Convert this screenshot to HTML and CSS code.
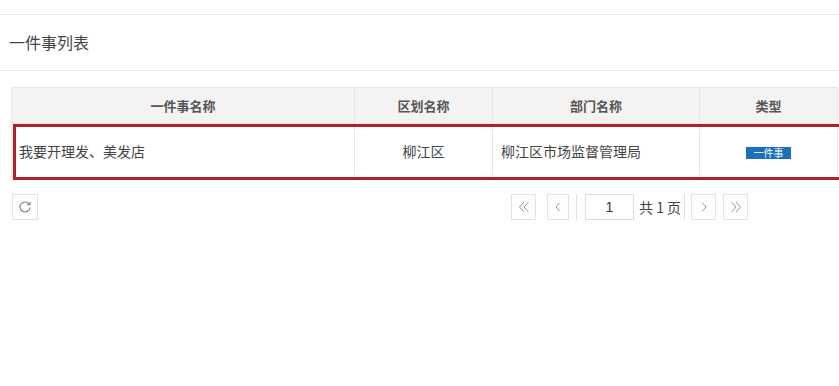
FILE: index.html
```html
<!DOCTYPE html>
<html lang="zh-CN">
<head>
  <meta charset="UTF-8">
  <title>一件事列表</title>
  <link rel="stylesheet" href="styles.css">
</head>
<body>

<div class="topbar"></div>

<div class="panel-heading">一件事列表</div>

<div class="panel-body">
  <div class="table-wrap">
    <table class="list-table">
      <thead>
        <tr>
          <th class="col-name">一件事名称</th>
          <th class="col-area">区划名称</th>
          <th class="col-dept">部门名称</th>
          <th class="col-type">类型</th>
        </tr>
      </thead>
      <tbody>
        <tr>
          <td class="left">我要开理发、美发店</td>
          <td>柳江区</td>
          <td class="left">柳江区市场监督管理局</td>
          <td><span class="badge">一件事</span></td>
        </tr>
      </tbody>
    </table>
    <div class="mark"></div>
  </div>

  <div class="toolbar">
    <div class="btn refresh">
      <svg width="14" height="14" viewBox="0 0 14 14">
        <path d="M11.2 4.2A5 5 0 1 0 12 7.5" fill="none" stroke="#777" stroke-width="1.1"/>
        <path d="M12 1.8V4.8H9" fill="none" stroke="#777" stroke-width="1.1"/>
      </svg>
    </div>
    <div class="pager">
      <div class="btn page-btn first">
        <svg width="12" height="12" viewBox="0 0 12 12"><path d="M6 1L1.5 6L6 11M10.5 1L6 6L10.5 11" fill="none" stroke="#999" stroke-width="1"/></svg>
      </div>
      <div class="btn page-btn prev">
        <svg width="12" height="12" viewBox="0 0 12 12"><path d="M8 1.5L4 6L8 10.5" fill="none" stroke="#999" stroke-width="1"/></svg>
      </div>
      <div class="sep"></div>
      <div class="page-input">1</div>
      <div class="page-total">共 1 页</div>
      <div class="sep sep-right"></div>
      <div class="btn page-btn next">
        <svg width="12" height="12" viewBox="0 0 12 12"><path d="M4 1.5L8 6L4 10.5" fill="none" stroke="#999" stroke-width="1"/></svg>
      </div>
      <div class="btn page-btn last">
        <svg width="12" height="12" viewBox="0 0 12 12"><path d="M1.5 1L6 6L1.5 11M6 1L10.5 6L6 11" fill="none" stroke="#999" stroke-width="1"/></svg>
      </div>
    </div>
  </div>
</div>

</body>
</html>
```

FILE: styles.css
```css
body {
  margin: 0;
  padding: 0;
  background-color: #fff;
  font-family: "Noto Sans CJK SC", "Liberation Sans", sans-serif;
  color: #333;
  overflow: hidden;
}
.topbar {
  height: 14px;
  border-bottom: 1px solid #ebebeb;
}
.panel-heading {
  height: 55px;
  line-height: 55px;
  padding-left: 9px;
  font-size: 16px;
  color: #444;
  border-bottom: 1px solid #e9e9e9;
}
.panel-body {
  padding: 16px 0 0 11px;
}
.table-wrap {
  position: relative;
  width: 826px;
}
.list-table {
  width: 826px;
  border-collapse: collapse;
  table-layout: fixed;
  font-size: 14px;
}
.list-table th,
.list-table td {
  box-sizing: border-box;
  border: 1px solid #e7e7e7;
  padding: 0 8px;
  text-align: center;
}
.list-table th {
  height: 36px;
  background-color: #f3f3f3;
  color: #555;
  font-weight: bold;
  font-size: 13px;
}
.list-table td {
  height: 55px;
  color: #444;
}
.list-table td.left {
  text-align: left;
}
.list-table td:first-child {
  padding-left: 7px;
}
.col-name { width: 343px; }
.col-area { width: 138px; }
.col-dept { width: 207px; }
.col-type { width: 138px; }
.badge {
  display: inline-block;
  width: 45px;
  height: 12px;
  line-height: 12px;
  background-color: #1d6fb8;
  color: #fff;
  font-size: 10px;
  text-align: center;
  vertical-align: middle;
}
/* red annotation box over the row */
.mark {
  position: absolute;
  left: 2px;
  top: 37px;
  width: 826px;
  height: 50px;
  border: 3px solid #b1212b;
  pointer-events: none;
}
.toolbar {
  display: flex;
  align-items: center;
  margin-top: 15px;
  padding-left: 1px;
}
.btn {
  box-sizing: border-box;
  height: 26px;
  border: 1px solid #e2e2e2;
  display: flex;
  align-items: center;
  justify-content: center;
}
.refresh {
  width: 26px;
}
.pager {
  display: flex;
  align-items: center;
  margin-left: 473px;
}
.page-btn {
  width: 25px;
}
.page-btn.prev {
  width: 22px;
}
.page-btn.first {
  margin-right: 11px;
}
.page-btn.next {
  margin-right: 7px;
}
.sep {
  width: 1px;
  height: 26px;
  background-color: #e2e2e2;
  margin: 0 8px 0 7px;
}
.sep.sep-right {
  margin: 0 6px 0 3px;
}
.page-input {
  box-sizing: border-box;
  width: 49px;
  height: 26px;
  border: 1px solid #dcdcdc;
  font-family: "Liberation Sans", sans-serif;
  font-size: 14px;
  line-height: 24px;
  text-align: center;
  color: #333;
}
.page-total {
  margin-left: 5px;
  font-size: 14px;
  color: #444;
}
```
